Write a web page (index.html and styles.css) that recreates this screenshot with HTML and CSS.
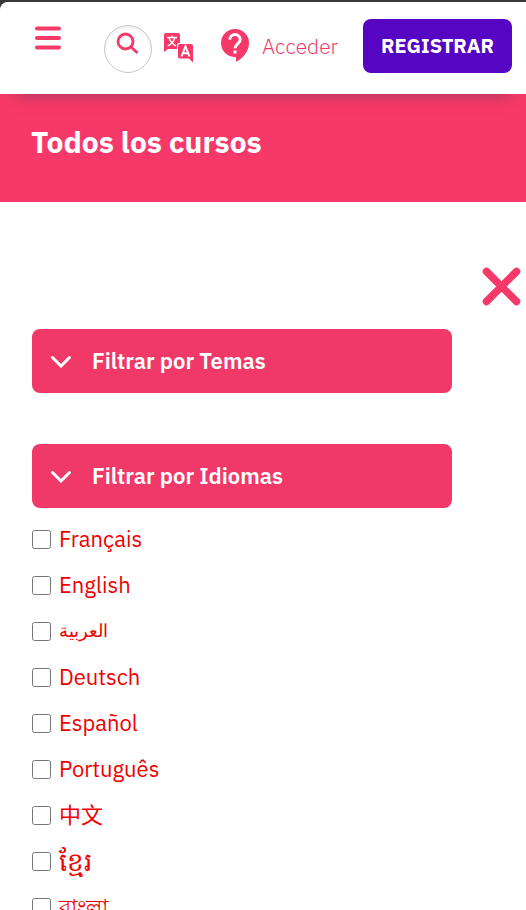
FILE: index.html
```html
<!DOCTYPE html>
<html lang="es">
<head>
<meta charset="utf-8">
<meta name="viewport" content="width=device-width, initial-scale=1">
<title>Todos los cursos</title>
<link rel="stylesheet" href="styles.css">
</head>
<body>
<header class="topbar">
  <button class="icon-button menu" type="button" aria-label="Menú">
    <svg width="28" height="24" viewBox="0 0 28 24"><path d="M3 2.500h22M3 12h22M3 21.500h22" fill="none" stroke="currentColor" stroke-width="4" stroke-linecap="round"/></svg>
  </button>
  <button class="icon-button search" type="button" aria-label="Buscar">
    <svg width="24" height="24" viewBox="0 0 24 24"><g fill="none" stroke="currentColor" stroke-width="2.8" stroke-linecap="round"><circle cx="9.500" cy="9.500" r="7.500"/><path d="M15 15l5.700 5.200"/></g></svg>
  </button>
  <button class="icon-button language" type="button" aria-label="Idioma">
    <svg width="30" height="30" viewBox="0 0 30 30"><path d="M2 0h12q2 0 2 2v8h-1q-2 0-2 2v4H4l-4 3V2q0-2 2-2z" fill="currentColor"/><path d="M3 4.500h10M8 2.500v2M11 4.500Q9 11 3.500 13M5 5Q7 10 12 13" fill="none" stroke="#fff" stroke-width="1.3"/><path d="M16 11h11q2 0 2 2V29.500l-4-4h-9q-2 0-2-2v-10.500q0-2 2-2z" fill="currentColor"/><path d="M17.500 23.500l4-10 4 10M19 20.300h5" fill="none" stroke="#fff" stroke-width="2"/></svg>
  </button>
  <a class="help" href="#" aria-label="Ayuda">
    <svg width="28" height="34" viewBox="0 0 28 34"><path d="M14 0a14 14 0 0 1 14 14c0 8-5.500 15-13 19v-5h-1A14 14 0 0 1 14 0z" fill="currentColor"/><path d="M8.800 10.800a5.200 5.200 0 1 1 10.400 0c0 4-5.200 4.200-5.200 8.500" fill="none" stroke="#fff" stroke-width="3"/><path d="M12.500 21.500h3v3h-3z" fill="#fff"/></svg>
  </a>
  <a class="login" href="#">Acceder</a>
  <button class="register" type="button">REGISTRAR</button>
</header>
<section class="banner">
  <h1>Todos los cursos</h1>
</section>
<main class="filters">
  <button class="close" type="button" aria-label="Cerrar">
    <svg width="40" height="40" viewBox="0 0 40 40"><path d="M5.500 5.500l30 30M35.500 5.500L5.500 35.500" fill="none" stroke="currentColor" stroke-width="7.500" stroke-linecap="round"/></svg>
  </button>
  <button class="filter" type="button">
    <svg width="22" height="14" viewBox="0 0 22 14"><path d="M2.500 3.500l8.500 8.500 8.500-8.500" fill="none" stroke="currentColor" stroke-width="3" stroke-linecap="round"/></svg>
    Filtrar por Temas
  </button>
  <button class="filter" type="button" aria-expanded="true">
    <svg width="22" height="14" viewBox="0 0 22 14"><path d="M2.500 3.500l8.500 8.500 8.500-8.500" fill="none" stroke="currentColor" stroke-width="3" stroke-linecap="round"/></svg>
    Filtrar por Idiomas
  </button>
  <ul class="languages">
    <li><label><input type="checkbox"><span>Français</span></label></li>
    <li><label><input type="checkbox"><span>English</span></label></li>
    <li><label><input type="checkbox"><span lang="ar">العربية</span></label></li>
    <li><label><input type="checkbox"><span>Deutsch</span></label></li>
    <li><label><input type="checkbox"><span>Español</span></label></li>
    <li><label><input type="checkbox"><span>Português</span></label></li>
    <li><label><input type="checkbox"><span lang="zh">中文</span></label></li>
    <li><label><input type="checkbox"><span lang="km">ខ្មែរ</span></label></li>
    <li><label><input type="checkbox"><span lang="bn">বাংলা</span></label></li>
  </ul>
</main>
</body>
</html>
```
FILE: styles.css
```css
* { box-sizing: border-box; }

html {
  background: #3b3839;
  scrollbar-width: none;
}

body {
  margin: 2px 0 0;
  background: #fff;
  border-top-left-radius: 8px;
  color: #f63968;
  font: 22px/30px "IBM Plex Sans", Roboto, "Noto Sans CJK SC", sans-serif;
}

button {
  padding: 0;
  border: 0;
  background: none;
  color: inherit;
  font: inherit;
  cursor: pointer;
}

a { color: inherit; text-decoration: none; }

svg { display: block; }

.topbar {
  position: relative;
  display: flex;
  align-items: center;
  height: 92px;
  padding: 0 14px 4px 34px;
  border-top-left-radius: 8px;
  background: #fff;
  box-shadow: 0 16px 14px -16px rgba(60, 60, 90, 0.5);
}

.menu { margin: 0 42px 16px 0; }

.search {
  display: flex;
  justify-content: center;
  width: 48px;
  height: 48px;
  margin: 6px 12px 0 0;
  padding-top: 6px;
  align-items: flex-start;
  border: 1px solid #c8c8c8;
  border-radius: 50%;
  box-shadow: inset 0 2px 3px #eee;
}

.language { margin-right: 27px; margin-top: 4px; }

.help { margin-right: 13px; }

.login {
  font-size: 21px;
  font-weight: 300;
}

.register {
  margin-left: auto;
  padding: 12px 18px;
  border-radius: 8px;
  background: #5605c3;
  color: #fff;
  font-size: 20px;
  font-weight: 700;
}

.banner {
  padding: 28px 31px 40px;
  background: #f63968;
}

h1 {
  margin: 0;
  color: #fff;
  font-size: 30px;
  font-weight: 700;
  line-height: 40px;
}

.filters {
  display: flex;
  flex-direction: column;
  padding: 64px 5px 0 32px;
}

.close { align-self: flex-end; margin-bottom: 23px; }

.filter {
  display: flex;
  align-items: center;
  gap: 20px;
  width: 100%;
  max-width: 420px;
  margin-bottom: 51px;
  padding: 17px 18px;
  border-radius: 8px;
  background: #f03968;
  color: #fff;
  font-weight: 600;
}

.languages {
  margin: -43px 0 0;
  padding: 0;
  list-style: none;
  color: #f00000;
}

.languages label {
  display: inline-flex;
  align-items: center;
  gap: 8px;
  height: 46px;
}

.languages li { height: 46px; }

.languages [lang="ar"] { font-size: 18px; }

.languages [lang="km"] { font-size: 26px; }

.languages input {
  width: 19px;
  height: 19px;
  margin: 0;
}
```
